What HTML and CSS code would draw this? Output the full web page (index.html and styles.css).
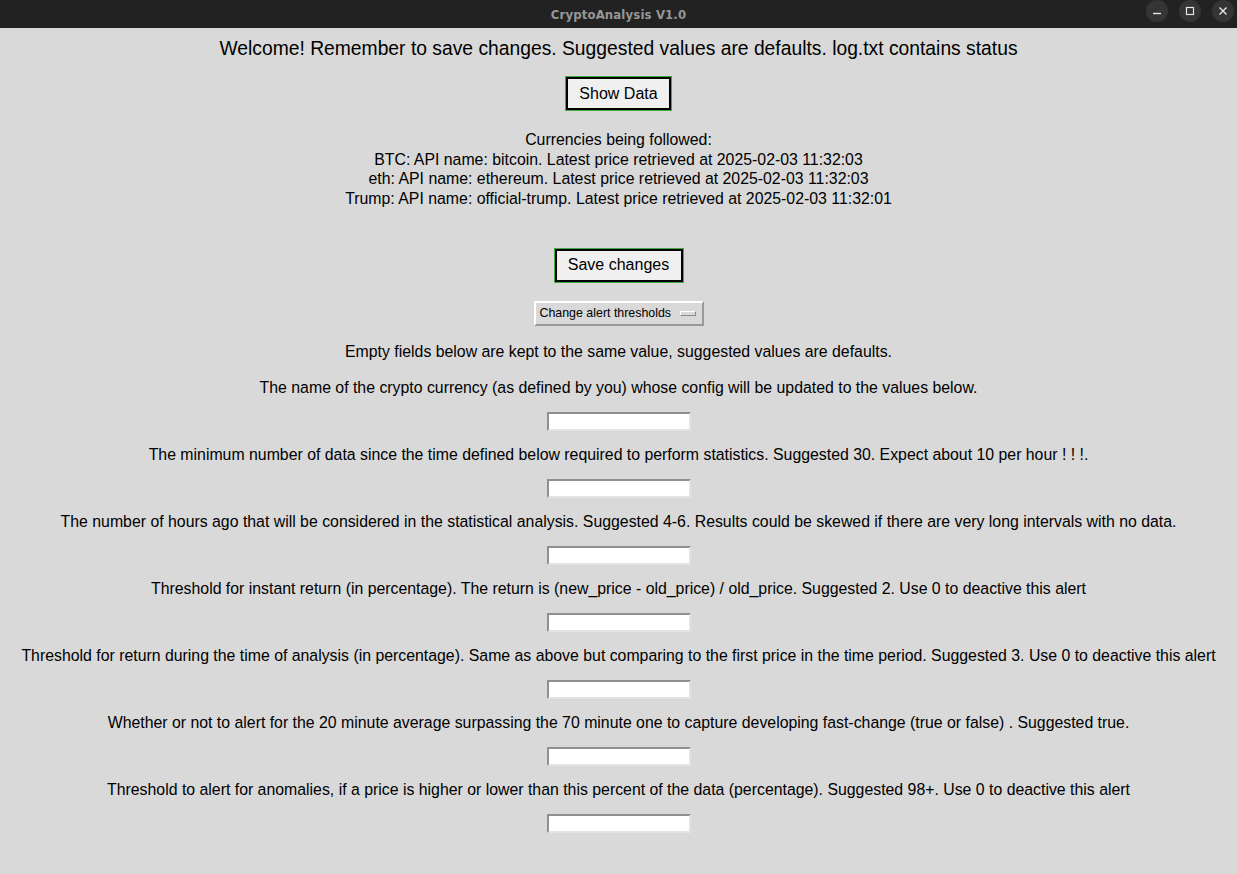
FILE: index.html
```html
<!DOCTYPE html>
<html>
<head>
<meta charset="utf-8">
<title>CryptoAnalysis V1.0</title>
<link rel="stylesheet" href="styles.css">
</head>
<body>
<div class="window">
  <header class="titlebar">
    <span class="title">CryptoAnalysis V1.0</span>
    <div class="controls">
      <span class="ctl"><svg width="10" height="10" viewBox="0 0 10 10"><line x1="1" y1="7.5" x2="9" y2="7.5" stroke="#e6e6e6" stroke-width="1.4"/></svg></span>
      <span class="ctl"><svg width="10" height="10" viewBox="0 0 10 10"><rect x="1.5" y="1.5" width="7" height="7" fill="none" stroke="#e6e6e6" stroke-width="1.2"/></svg></span>
      <span class="ctl"><svg width="10" height="10" viewBox="0 0 10 10"><path d="M1.5 1.5 L8.5 8.5 M8.5 1.5 L1.5 8.5" stroke="#e6e6e6" stroke-width="1.4"/></svg></span>
    </div>
  </header>
  <main class="content">
    <p class="welcome">Welcome! Remember to save changes. Suggested values are defaults. log.txt contains status</p>
    <button class="btn btn-show">Show Data</button>
    <div class="currencies">
      <div>Currencies being followed:</div>
      <div>BTC: API name: bitcoin. Latest price retrieved at 2025-02-03 11:32:03</div>
      <div>eth: API name: ethereum. Latest price retrieved at 2025-02-03 11:32:03</div>
      <div>Trump: API name: official-trump. Latest price retrieved at 2025-02-03 11:32:01</div>
    </div>
    <button class="btn btn-save">Save changes</button>
    <div class="menubtn">Change alert thresholds <span class="indicator"></span></div>
    <p class="note">Empty fields below are kept to the same value, suggested values are defaults.</p>
    <div class="field">
      <label>The name of the crypto currency (as defined by you) whose config will be updated to the values below.</label>
      <input class="entry" type="text">
    </div>
    <div class="field">
      <label>The minimum number of data since the time defined below required to perform statistics. Suggested 30. Expect about 10 per hour ! ! !.</label>
      <input class="entry" type="text">
    </div>
    <div class="field">
      <label>The number of hours ago that will be considered in the statistical analysis. Suggested 4-6. Results could be skewed if there are very long intervals with no data.</label>
      <input class="entry" type="text">
    </div>
    <div class="field">
      <label>Threshold for instant return (in percentage). The return is (new_price - old_price) / old_price. Suggested 2. Use 0 to deactive this alert</label>
      <input class="entry" type="text">
    </div>
    <div class="field">
      <label>Threshold for return during the time of analysis (in percentage). Same as above but comparing to the first price in the time period. Suggested 3. Use 0 to deactive this alert</label>
      <input class="entry" type="text">
    </div>
    <div class="field">
      <label>Whether or not to alert for the 20 minute average surpassing the 70 minute one to capture developing fast-change (true or false) . Suggested true.</label>
      <input class="entry" type="text">
    </div>
    <div class="field">
      <label>Threshold to alert for anomalies, if a price is higher or lower than this percent of the data (percentage). Suggested 98+. Use 0 to deactive this alert</label>
      <input class="entry" type="text">
    </div>
  </main>
</div>
</body>
</html>
```

FILE: styles.css
```css
html, body {
  margin: 0;
  padding: 0;
  background: #d9d9d9;
}
body {
  width: 1237px;
  height: 874px;
  overflow: hidden;
  font-family: "Liberation Sans", Arial, sans-serif;
  color: #000;
}
.window {
  display: flex;
  flex-direction: column;
  height: 874px;
}
.titlebar {
  height: 28px;
  background: #222222;
  display: flex;
  align-items: center;
  justify-content: center;
  position: relative;
  flex-shrink: 0;
}
.title {
  color: #979797;
  font-family: "DejaVu Sans Condensed", "DejaVu Sans", sans-serif;
  font-weight: bold;
  font-size: 13px;
  letter-spacing: 0.15px;
}
.controls {
  position: absolute;
  right: 3px;
  top: 0;
  height: 21px;
  display: flex;
  gap: 11px;
  align-items: center;
}
.ctl {
  width: 22px;
  height: 22px;
  border-radius: 50%;
  background: #353535;
  display: flex;
  align-items: center;
  justify-content: center;
}
.content {
  display: flex;
  flex-direction: column;
  align-items: center;
  padding-top: 10px;
}
.welcome {
  margin: 0;
  font-size: 19.3px;
  line-height: 22px;
}
.btn {
  font-family: "Liberation Sans", Arial, sans-serif;
  font-size: 16px;
  color: #000;
  background: #f0f0f0;
  border: 2px solid #000;
  outline: 1px solid #3fae3f;
  outline-offset: 0;
  height: 33px;
  padding: 0;
  margin: 0;
  box-sizing: border-box;
}
.btn-show {
  margin-top: 17px;
  width: 105px;
}
.currencies {
  margin-top: 20px;
  font-size: 15.85px;
  line-height: 19.7px;
  text-align: center;
}
.btn-save {
  margin-top: 40px;
  width: 128px;
}
.menubtn {
  margin-top: 19px;
  width: 170px;
  height: 25px;
  box-sizing: border-box;
  border-top: 2px solid #ffffff;
  border-left: 2px solid #ffffff;
  border-right: 2px solid #9a9a9a;
  border-bottom: 2px solid #9a9a9a;
  background: #d9d9d9;
  font-size: 12.4px;
  display: flex;
  align-items: center;
  padding-left: 4px;
}
.indicator {
  width: 14px;
  height: 3px;
  margin-left: auto;
  margin-right: 6px;
  border-top: 1px solid #ffffff;
  border-left: 1px solid #ffffff;
  border-right: 1px solid #8a8a8a;
  border-bottom: 1px solid #8a8a8a;
  background: #d9d9d9;
}
.note {
  margin: 16px 0 0;
  font-size: 15.85px;
  line-height: 20px;
}
.field {
  display: flex;
  flex-direction: column;
  align-items: center;
  margin-top: 16px;
}
.field + .field {
  margin-top: 14px;
}
.field label {
  font-size: 15.85px;
  line-height: 20px;
  white-space: nowrap;
}
.entry {
  margin-top: 14px;
  margin-left: 1px;
  width: 144px;
  height: 19px;
  box-sizing: border-box;
  background: #ffffff;
  border-top: 2px solid #8f8f8f;
  border-left: 2px solid #8f8f8f;
  border-right: 2px solid #e3e3e3;
  border-bottom: 2px solid #e3e3e3;
  padding: 0;
  outline: none;
}
```
